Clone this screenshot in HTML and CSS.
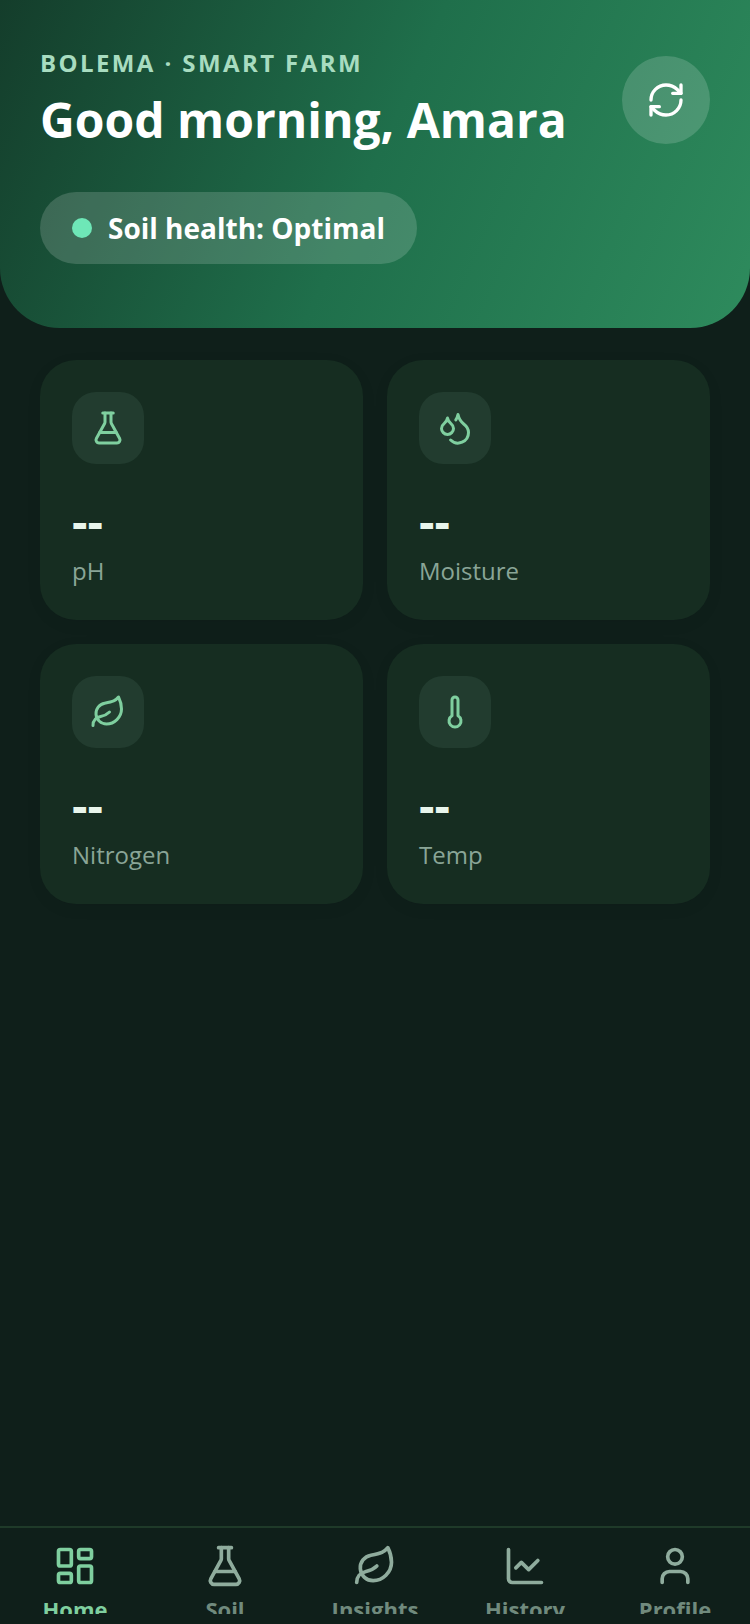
FILE: index.html
```html
<!DOCTYPE html>
<html lang="en">
<head>
<meta charset="utf-8">
<meta name="viewport" content="width=device-width, initial-scale=1">
<title>Bolema Smart Farm</title>
<link rel="stylesheet" href="styles.css">
</head>
<body>
<div class="app">
  <header class="hero">
    <div class="hero-top">
      <div class="hero-text">
        <p class="eyebrow">BOLEMA · SMART FARM</p>
        <h1 class="greeting">Good morning, Amara</h1>
      </div>
      <button class="refresh" type="button" aria-label="Refresh">
        <svg class="icon icon-refresh" viewBox="0 0 24 24"><path d="M3 12a9 9 0 0 1 9-9 9.75 9.75 0 0 1 6.74 2.74L21 8"/><path d="M21 3v5h-5"/><path d="M21 12a9 9 0 0 1-9 9 9.75 9.75 0 0 1-6.74-2.74L3 16"/><path d="M8 16H3v5"/></svg>
      </button>
    </div>
    <div class="status"><span class="status-dot"></span>Soil health: Optimal</div>
  </header>

  <main class="content">
    <div class="metrics">
      <section class="card">
        <div class="tile"><svg class="icon icon-tile" viewBox="0 0 24 24"><path d="M14 2v6a2 2 0 0 0 .245.96l5.51 10.08A2 2 0 0 1 18 22H6a2 2 0 0 1-1.755-2.96l5.51-10.08A2 2 0 0 0 10 8V2"/><path d="M6.453 15h11.094"/><path d="M8.5 2h7"/></svg></div>
        <p class="value">--</p>
        <h2 class="label">pH</h2>
      </section>
      <section class="card">
        <div class="tile"><svg class="icon icon-tile" viewBox="0 0 24 24"><path d="M7 16.3c2.2 0 4-1.83 4-4.05 0-1.16-.57-2.26-1.71-3.19S7.29 6.75 7 5.3c-.29 1.45-1.14 2.84-2.29 3.76S3 11.1 3 12.25c0 2.22 1.8 4.05 4 4.05z"/><path d="M12.56 6.6A10.97 10.97 0 0 0 14 3.02c.5 2.5 2 4.9 4 6.5s3 3.5 3 5.5a6.98 6.98 0 0 1-11.91 4.97"/></svg></div>
        <p class="value">--</p>
        <h2 class="label">Moisture</h2>
      </section>
      <section class="card">
        <div class="tile"><svg class="icon icon-tile" viewBox="0 0 24 24"><path d="M11 20A7 7 0 0 1 9.8 6.1C15.5 5 17 4.48 19 2c1 2 2 4.18 2 8 0 5.5-4.78 10-10 10Z"/><path d="M2 21c0-3 1.85-5.36 5.08-6C9.5 14.52 12 13 13 12"/></svg></div>
        <p class="value">--</p>
        <h2 class="label">Nitrogen</h2>
      </section>
      <section class="card">
        <div class="tile"><svg class="icon icon-tile" viewBox="0 0 24 24"><path d="M14 4v10.54a4 4 0 1 1-4 0V4a2 2 0 0 1 4 0Z"/></svg></div>
        <p class="value">--</p>
        <h2 class="label">Temp</h2>
      </section>
    </div>
  </main>

  <nav class="tabs" aria-label="Main">
    <a class="tab tab-active" href="#home" aria-current="page">
      <svg class="icon icon-tab" viewBox="0 0 24 24"><rect width="7" height="9" x="3" y="3" rx="1"/><rect width="7" height="5" x="14" y="3" rx="1"/><rect width="7" height="9" x="14" y="12" rx="1"/><rect width="7" height="5" x="3" y="16" rx="1"/></svg>
      <span class="tab-label">Home</span>
    </a>
    <a class="tab" href="#soil">
      <svg class="icon icon-tab" viewBox="0 0 24 24"><path d="M14 2v6a2 2 0 0 0 .245.96l5.51 10.08A2 2 0 0 1 18 22H6a2 2 0 0 1-1.755-2.96l5.51-10.08A2 2 0 0 0 10 8V2"/><path d="M6.453 15h11.094"/><path d="M8.5 2h7"/></svg>
      <span class="tab-label">Soil</span>
    </a>
    <a class="tab" href="#insights">
      <svg class="icon icon-tab" viewBox="0 0 24 24"><path d="M11 20A7 7 0 0 1 9.8 6.1C15.5 5 17 4.48 19 2c1 2 2 4.18 2 8 0 5.5-4.78 10-10 10Z"/><path d="M2 21c0-3 1.85-5.36 5.08-6C9.5 14.52 12 13 13 12"/></svg>
      <span class="tab-label">Insights</span>
    </a>
    <a class="tab" href="#history">
      <svg class="icon icon-tab" viewBox="0 0 24 24"><path d="M3 3v16a2 2 0 0 0 2 2h16"/><path d="m19 9-5 5-4-4-3 3"/></svg>
      <span class="tab-label">History</span>
    </a>
    <a class="tab" href="#profile">
      <svg class="icon icon-tab" viewBox="0 0 24 24"><path d="M19 21v-2a4 4 0 0 0-4-4H9a4 4 0 0 0-4 4v2"/><circle cx="12" cy="7" r="4"/></svg>
      <span class="tab-label">Profile</span>
    </a>
  </nav>
</div>
</body>
</html>
```
FILE: styles.css
```css
* {
  box-sizing: border-box;
}

body {
  margin: 0;
  background: #0f1f1a;
  color: #ffffff;
  font-family: "Open Sans", "Noto Sans", sans-serif;
}

h1, h2, p {
  margin: 0;
}

.app {
  display: flex;
  flex-direction: column;
  min-height: 100vh;
}

.icon {
  display: block;
  fill: none;
  stroke: currentColor;
  stroke-width: 2;
  stroke-linecap: round;
  stroke-linejoin: round;
}

.icon-refresh {
  width: 40px;
  height: 40px;
}

.icon-tile {
  width: 36px;
  height: 36px;
}

.icon-tab {
  flex: none;
  width: 44px;
  height: 44px;
}

.hero {
  padding: 48px 40px 64px;
  border-radius: 0 0 60px 60px;
  background: linear-gradient(114deg, #143d2b 0%, #1f6f4b 50%, #2e8b5d 100%);
}

.hero-top {
  display: flex;
  align-items: center;
  justify-content: space-between;
  margin-bottom: 40px;
}

.eyebrow {
  margin-bottom: 10px;
  color: #a8dcc0;
  font-size: 24px;
  font-weight: 700;
  line-height: 30px;
  letter-spacing: 0.1em;
}

.greeting {
  font-size: 48px;
  font-weight: 700;
  line-height: 64px;
}

.refresh {
  display: grid;
  place-items: center;
  width: 88px;
  height: 88px;
  padding: 0;
  border: 0;
  border-radius: 50%;
  background: rgba(255, 255, 255, 0.16);
  color: #ffffff;
}

.status {
  display: inline-flex;
  align-items: center;
  gap: 16px;
  padding: 16px 32px;
  border-radius: 36px;
  background: rgba(255, 255, 255, 0.16);
  font-size: 28px;
  font-weight: 700;
  line-height: 40px;
}

.status-dot {
  width: 20px;
  height: 20px;
  border-radius: 50%;
  background: #6ee7b7;
}

.content {
  flex: 1;
  padding: 32px 40px;
}

.metrics {
  display: grid;
  grid-template-columns: 1fr 1fr;
  gap: 24px;
}

.card {
  padding: 32px;
  border-radius: 36px;
  background: #162d21;
  box-shadow: 0 4px 16px rgba(0, 0, 0, 0.06);
}

.tile {
  display: grid;
  place-items: center;
  width: 72px;
  height: 72px;
  margin-bottom: 28px;
  border-radius: 24px;
  background: #223c2f;
  color: #7fcf9f;
}

.value {
  color: #e8f5ec;
  font-size: 48px;
  font-weight: 700;
  line-height: 58px;
}

.label {
  margin-top: 4px;
  color: #8aa597;
  font-size: 24px;
  font-weight: 400;
  line-height: 34px;
}

.tabs {
  display: grid;
  grid-template-columns: repeat(5, 1fr);
  height: 98px;
  padding: 16px 0 10px;
  border-top: 2px solid #1f3a29;
}

.tab {
  display: flex;
  flex-direction: column;
  align-items: center;
  overflow: hidden;
  color: #8fac9d;
  text-decoration: none;
}

.tab-label {
  margin-top: 6px;
  color: #708a7d;
  font-size: 22px;
  font-weight: 700;
  line-height: 30px;
}

.tab-active,
.tab-active .tab-label {
  color: #7fcf9f;
}
```
